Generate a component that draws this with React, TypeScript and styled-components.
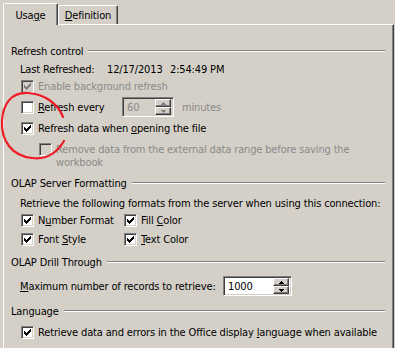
import React from 'react';
import styled, { createGlobalStyle } from 'styled-components';

const Global = createGlobalStyle`
  html, body {
    margin: 0;
    padding: 0;
    background: #d4d0c8;
  }
  body {
    font-family: "DejaVu Sans Condensed", "DejaVu Sans", sans-serif;
    font-stretch: condensed;
    font-size: 11px;
    letter-spacing: -0.15px;
    color: #000;
  }
`;

const Window = styled.div`
  position: relative;
  width: 395px;
  height: 348px;
  overflow: hidden;
  background: #d4d0c8;
`;

const TabStrip = styled.div`
  display: flex;
  align-items: flex-end;
  height: 24px;
  padding-left: 3px;
  position: relative;
  z-index: 2;
`;

const Tab = styled.div<{ $active?: boolean }>`
  box-sizing: border-box;
  height: ${p => (p.$active ? 22 : 19)}px;
  margin-bottom: ${p => (p.$active ? -1 : 0)}px;
  padding-top: ${p => (p.$active ? 2 : 1)}px;
  width: ${p => (p.$active ? 55 : 60)}px;
  display: flex;
  align-items: center;
  justify-content: center;
  background: #d4d0c8;
  border-top: 1px solid #fff;
  border-left: 1px solid #fff;
  border-right: 1px solid #404040;
  box-shadow: inset -1px 0 0 #808080;
  border-top-left-radius: 2px;
  border-top-right-radius: 2px;
`;

const Panel = styled.div`
  box-sizing: border-box;
  margin-left: 3px;
  width: 391px;
  height: 330px;
  border-top: 1px solid #fff;
  border-left: 1px solid #fff;
  border-right: 1px solid #404040;
  box-shadow: inset -1px 0 0 #808080;
  padding: 18px 8px 0 7px;
  display: flex;
  flex-direction: column;
`;

const GroupHeader = styled.div<{ $top: number }>`
  display: flex;
  align-items: center;
  height: 16px;
  margin-top: ${p => p.$top}px;
  white-space: nowrap;
`;

const Etch = styled.div`
  flex: 1;
  height: 0;
  margin-left: 5px;
  border-top: 1px solid #808080;
  border-bottom: 1px solid #fff;
`;

const Row = styled.div<{ $top: number; $indent?: number; $h?: number }>`
  display: flex;
  align-items: center;
  height: ${p => p.$h ?? 16}px;
  margin-top: ${p => p.$top}px;
  margin-left: ${p => p.$indent ?? 9}px;
  white-space: nowrap;
`;

const Field = styled.span<{ $w: number }>`
  flex: none;
  width: ${p => p.$w}px;
`;

const Check = styled.label<{ $disabled?: boolean; $width?: number }>`
  display: flex;
  align-items: ${p => (p.$width ? 'flex-start' : 'center')};
  gap: 4px;
  color: ${p => (p.$disabled ? '#8a8a8a' : '#000')};
  ${p => (p.$width ? `width: ${p.$width}px;` : '')}
`;

const Box = styled.span<{ $disabled?: boolean }>`
  box-sizing: border-box;
  flex: none;
  width: 13px;
  height: 13px;
  display: flex;
  align-items: center;
  justify-content: center;
  background: ${p => (p.$disabled ? '#d4d0c8' : '#fff')};
  border-top: 1px solid #808080;
  border-left: 1px solid #808080;
  border-right: 1px solid #fff;
  border-bottom: 1px solid #fff;
  box-shadow: inset 1px 1px 0 #404040, inset -1px -1px 0 #d4d0c8;
`;

const Text = styled.span<{ $w?: number }>`
  ${p => (p.$w ? `width: ${p.$w}px;` : '')}
`;

const Wrap = styled.span`
  white-space: normal;
  line-height: 12.5px;
  margin-top: 1px;
`;

const Key = styled.span`
  text-decoration: underline;
  text-underline-offset: 1px;
`;

const Spin = styled.div<{ $disabled?: boolean; $w: number }>`
  box-sizing: border-box;
  flex: none;
  width: ${p => p.$w}px;
  height: 20px;
  display: flex;
  align-items: center;
  background: ${p => (p.$disabled ? '#d4d0c8' : '#fff')};
  color: ${p => (p.$disabled ? '#8a8a8a' : '#000')};
  border-top: 1px solid #808080;
  border-left: 1px solid #808080;
  border-right: 1px solid #fff;
  border-bottom: 1px solid #fff;
  box-shadow: inset 1px 1px 0 #404040, inset -1px -1px 0 #d4d0c8;
  padding: 2px 2px 2px 4px;
`;

const SpinValue = styled.span`
  flex: 1;
`;

const SpinButtons = styled.div`
  display: flex;
  flex-direction: column;
  width: 16px;
  height: 16px;
`;

const SpinButton = styled.div<{ $disabled?: boolean }>`
  box-sizing: border-box;
  flex: 1;
  display: flex;
  align-items: center;
  justify-content: center;
  background: #d4d0c8;
  border-top: 1px solid #fff;
  border-left: 1px solid #fff;
  border-right: 1px solid #404040;
  border-bottom: 1px solid #404040;
  box-shadow: inset -1px -1px 0 #808080;
  color: ${p => (p.$disabled ? '#808080' : '#000')};
`;

const Muted = styled.span`
  color: #8a8a8a;
  margin-left: 8px;
`;

const Grid = styled.div`
  display: grid;
  grid-template-columns: 103px auto;
  row-gap: 3px;
  margin-left: 10px;
  margin-top: 1px;
`;

const GridCell = styled.div`
  height: 16px;
  display: flex;
  align-items: center;
`;

const Scribble = styled.svg`
  position: absolute;
  left: 0;
  top: 0;
  pointer-events: none;
  z-index: 5;
`;

const Tick = ({ color = '#000' }: { color?: string }) => (
  <svg width="7" height="7" viewBox="0 0 7 7">
    <path d="M0 2h1v1h1v1h1v-1h1v-1h1v-1h1v-1h1v3h-1v1h-1v1h-1v1h-1v1h-1v-1h-1v-1h-1z" fill={color} />
  </svg>
);

const Arrow = ({ up }: { up?: boolean }) => (
  <svg width="5" height="3" viewBox="0 0 5 3">
    <path d={up ? 'M2 0h1v1h1v1h1v1H0V2h1V1h1z' : 'M0 0h5v1H4v1H3v1H2V2H1V1H0z'} fill="currentColor" />
  </svg>
);

const CheckBox = ({ checked, disabled }: { checked?: boolean; disabled?: boolean }) => (
  <Box $disabled={disabled}>{checked && <Tick color={disabled ? '#808080' : '#000'} />}</Box>
);

const SpinBox = ({ value, width, disabled }: { value: string; width: number; disabled?: boolean }) => (
  <Spin $w={width} $disabled={disabled}>
    <SpinValue>{value}</SpinValue>
    <SpinButtons>
      <SpinButton $disabled={disabled}><Arrow up /></SpinButton>
      <SpinButton $disabled={disabled}><Arrow /></SpinButton>
    </SpinButtons>
  </Spin>
);

const App = () => {
  return (
    <Window>
      <Global />
      <TabStrip>
        <Tab $active><span>Usa<Key>g</Key>e</span></Tab>
        <Tab><span><Key>D</Key>efinition</span></Tab>
      </TabStrip>
      <Panel>
        <GroupHeader $top={0}>
          Refresh control
          <Etch />
        </GroupHeader>
        <Row $top={2}>
          <Field $w={87}>Last Refreshed:</Field>
          <Field $w={63}>12/17/2013</Field>
          <span>2:54:49 PM</span>
        </Row>
        <Row $top={1} $indent={10}>
          <Check $disabled>
            <CheckBox checked disabled />
            <Text>Enable back<Key>g</Key>round refresh</Text>
          </Check>
        </Row>
        <Row $top={3} $indent={10} $h={20}>
          <Check>
            <CheckBox />
            <Text $w={84}><Key>R</Key>efresh every</Text>
          </Check>
          <SpinBox value="60" width={52} disabled />
          <Muted>minutes</Muted>
        </Row>
        <Row $top={3} $indent={10}>
          <Check>
            <CheckBox checked />
            <Text>Refresh data when <Key>o</Key>pening the file</Text>
          </Check>
        </Row>
        <Row $top={7} $indent={28} $h={26}>
          <Check $disabled $width={335}>
            <CheckBox disabled />
            <Wrap>Remove data from the external data range before saving the workbook</Wrap>
          </Check>
        </Row>
        <GroupHeader $top={6}>
          OLAP Server Formatting
          <Etch />
        </GroupHeader>
        <Row $top={4}>Retrieve the following formats from the server when using this connection:</Row>
        <Grid>
          <GridCell><Check><CheckBox checked /><Text>N<Key>u</Key>mber Format</Text></Check></GridCell>
          <GridCell><Check><CheckBox checked /><Text>Fill <Key>C</Key>olor</Text></Check></GridCell>
          <GridCell><Check><CheckBox checked /><Text>Font <Key>S</Key>tyle</Text></Check></GridCell>
          <GridCell><Check><CheckBox checked /><Text><Key>T</Key>ext Color</Text></Check></GridCell>
        </Grid>
        <GroupHeader $top={7}>
          OLAP Drill Through
          <Etch />
        </GroupHeader>
        <Row $top={6} $h={20}>
          <Field $w={203}><Key>M</Key>aximum number of records to retrieve:</Field>
          <SpinBox value="1000" width={69} />
        </Row>
        <GroupHeader $top={7}>
          Language
          <Etch />
        </GroupHeader>
        <Row $top={5} $indent={10}>
          <Check>
            <CheckBox checked />
            <Text>Retrieve data and errors in the Office display <Key>l</Key>anguage when available</Text>
          </Check>
        </Row>
      </Panel>
      <Scribble width="395" height="348" viewBox="0 0 395 348">
        <path
          d="M63 117 C58 104 45 94 28 93 C12 92 3 103 2 121 C1 141 12 156 32 158 C48 160 58 151 64 141"
          fill="none"
          stroke="#ee1c24"
          strokeWidth="2.2"
          strokeLinecap="round"
        />
      </Scribble>
    </Window>
  );
};

export default App;
